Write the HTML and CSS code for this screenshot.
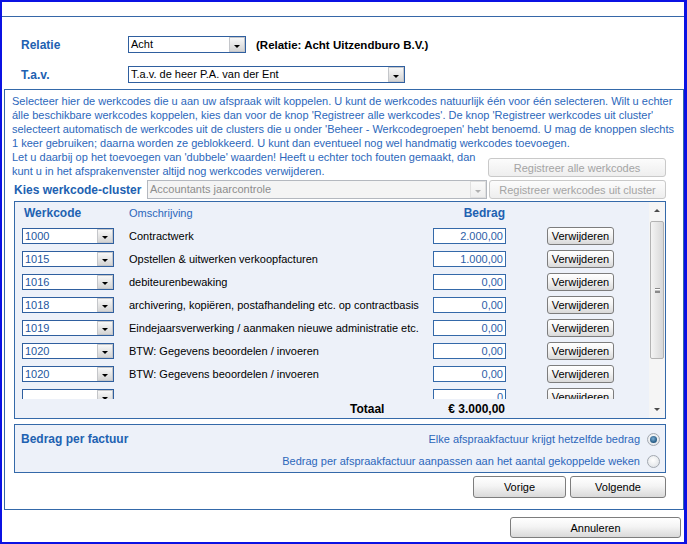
FILE: index.html
```html
<!DOCTYPE html>
<html lang="nl">
<head>
<meta charset="utf-8">
<title>Werkcodes koppelen</title>
<link rel="stylesheet" href="styles.css">
</head>
<body>
<div class="window">
  <div class="top">
    <div class="field-row">
      <span class="lbl-top">Relatie</span>
      <div class="select sel-relatie"><span class="val">Acht</span><span class="dd"></span></div>
      <span class="rel-info">(Relatie: Acht Uitzendburo B.V.)</span>
    </div>
    <div class="field-row">
      <span class="lbl-top">T.a.v.</span>
      <div class="select sel-tav"><span class="val">T.a.v. de heer P.A. van der Ent</span><span class="dd"></span></div>
    </div>
  </div>

  <div class="panel">
    <p class="desc">Selecteer hier de werkcodes die u aan uw afspraak wilt koppelen. U kunt de werkcodes natuurlijk één voor één selecteren. Wilt u echter<br>álle beschikbare werkcodes koppelen, kies dan voor de knop 'Registreer alle werkcodes'. De knop 'Registreer werkcodes uit cluster'<br>selecteert automatisch de werkcodes uit de clusters die u onder 'Beheer - Werkcodegroepen' hebt benoemd. U mag de knoppen slechts<br>1 keer gebruiken; daarna worden ze geblokkeerd. U kunt dan eventueel nog wel handmatig werkcodes toevoegen.</p>
    <div class="warn-row">
      <p class="desc warn">Let u daarbij op het toevoegen van 'dubbele' waarden! Heeft u echter toch fouten gemaakt, dan<br>kunt u in het afsprakenvenster altijd nog werkcodes verwijderen.</p>
      <button class="btn-dis btn-reg">Registreer alle werkcodes</button>
    </div>
    <div class="cluster-row">
      <span class="lbl-cluster">Kies werkcode-cluster</span>
      <div class="select select-dis"><span class="val">Accountants jaarcontrole</span><span class="dd dd-dis"></span></div>
      <button class="btn-dis btn-cluster">Registreer werkcodes uit cluster</button>
    </div>

    <div class="codes">
      <div class="codes-main">
        <div class="codes-head">
          <span class="h-code">Werkcode</span>
          <span class="h-omschr">Omschrijving</span>
          <span class="h-bedrag">Bedrag</span>
        </div>
        <div class="codes-rows">
          <div class="row"><div class="select code-sel"><span class="val">1000</span><span class="dd"></span></div><span class="omschr">Contractwerk</span><span class="amount">2.000,00</span><button class="btn del">Verwijderen</button></div>
          <div class="row"><div class="select code-sel"><span class="val">1015</span><span class="dd"></span></div><span class="omschr">Opstellen &amp; uitwerken verkoopfacturen</span><span class="amount">1.000,00</span><button class="btn del">Verwijderen</button></div>
          <div class="row"><div class="select code-sel"><span class="val">1016</span><span class="dd"></span></div><span class="omschr">debiteurenbewaking</span><span class="amount">0,00</span><button class="btn del">Verwijderen</button></div>
          <div class="row"><div class="select code-sel"><span class="val">1018</span><span class="dd"></span></div><span class="omschr">archivering, kopiëren, postafhandeling etc. op contractbasis</span><span class="amount">0,00</span><button class="btn del">Verwijderen</button></div>
          <div class="row"><div class="select code-sel"><span class="val">1019</span><span class="dd"></span></div><span class="omschr">Eindejaarsverwerking / aanmaken nieuwe administratie etc.</span><span class="amount">0,00</span><button class="btn del">Verwijderen</button></div>
          <div class="row"><div class="select code-sel"><span class="val">1020</span><span class="dd"></span></div><span class="omschr">BTW: Gegevens beoordelen / invoeren</span><span class="amount">0,00</span><button class="btn del">Verwijderen</button></div>
          <div class="row"><div class="select code-sel"><span class="val">1020</span><span class="dd"></span></div><span class="omschr">BTW: Gegevens beoordelen / invoeren</span><span class="amount">0,00</span><button class="btn del">Verwijderen</button></div>
          <div class="row"><div class="select code-sel"><span class="val"></span><span class="dd"></span></div><span class="omschr"></span><span class="amount">0</span><button class="btn del">Verwijderen</button></div>
        </div>
        <div class="codes-total">
          <span class="t-code"></span>
          <span class="t-lbl">Totaal</span>
          <span class="t-sum">€ 3.000,00</span>
        </div>
      </div>
      <div class="vscroll">
        <div class="sb-btn"><span class="arr-up"></span></div>
        <div class="sb-track"><div class="sb-thumb"><span class="grip"></span></div></div>
        <div class="sb-btn"><span class="arr-down"></span></div>
      </div>
    </div>

    <div class="factuur">
      <div class="f-row">
        <span class="f-lbl">Bedrag per factuur</span>
        <span class="f-opt">Elke afspraakfactuur krijgt hetzelfde bedrag</span>
        <span class="radio on"></span>
      </div>
      <div class="f-row">
        <span class="f-opt">Bedrag per afspraakfactuur aanpassen aan het aantal gekoppelde weken</span>
        <span class="radio"></span>
      </div>
    </div>

    <div class="nav">
      <button class="btn btn-vorige">Vorige</button>
      <button class="btn btn-volgende">Volgende</button>
    </div>
  </div>

  <div class="footer">
    <button class="btn btn-annuleren">Annuleren</button>
  </div>
</div>
</body>
</html>
```

FILE: styles.css
```css
body {
  margin: 0;
}

.window {
  width: 687px;
  height: 544px;
  box-sizing: border-box;
  border-style: solid;
  border-color: #0b12e3;
  border-width: 2px 3px 2px 2px;
  background: #fff;
  font-family: "Liberation Sans", Arial, sans-serif;
  font-size: 11px;
  color: #000;
  overflow: hidden;
}

/* ---------- top fields ---------- */
.top {
  margin-top: 14px;
  border-top: 1px solid #3667a8;
  padding: 19px 0 6px;
  display: flex;
  flex-direction: column;
  gap: 13px;
}

.field-row {
  display: flex;
  align-items: center;
  height: 17px;
}

.lbl-top {
  width: 107px;
  margin-left: 19px;
  font-weight: bold;
  font-size: 12px;
  color: #2161b1;
}

.select {
  display: flex;
  height: 17px;
  box-sizing: border-box;
  border: 1px solid #2f5f9f;
  background: #fff;
}

.select .val {
  flex: 1;
  padding-left: 2px;
  line-height: 15px;
  white-space: nowrap;
  overflow: hidden;
}

.dd {
  width: 16px;
  box-sizing: border-box;
  border: 1px solid #c4c6ca;
  background: linear-gradient(#f8f8f8, #d4d4d4);
  display: flex;
  align-items: center;
  justify-content: center;
}

.dd::after {
  content: "";
  border-left: 3px solid transparent;
  border-right: 3px solid transparent;
  border-top: 3px solid #000;
  margin-top: 3px;
}

.sel-relatie {
  width: 118px;
}

.sel-tav {
  width: 277px;
}

.rel-info {
  margin-left: 10px;
  font-weight: bold;
  font-size: 11.5px;
}

/* ---------- panel ---------- */
.panel {
  margin-left: 2px;
  height: 421px;
  box-sizing: border-box;
  border: 1px solid #3469a9;
}

.desc {
  margin: 4px 0 0 7px;
  line-height: 14px;
  color: #2c67bb;
  white-space: nowrap;
}

.warn-row {
  display: flex;
  align-items: flex-end;
}

.desc.warn {
  margin-top: 0;
  width: 476px;
}

.btn-dis {
  height: 19px;
  padding: 0;
  font-family: "Liberation Sans", Arial, sans-serif;
  font-size: 11px;
  color: #a4a4a4;
  border: 1px solid #c9c9c9;
  border-radius: 3px;
  background: linear-gradient(#fcfcfc, #eeeeee);
}

.btn-reg {
  width: 178px;
  margin-bottom: 1px;
}

.cluster-row {
  display: flex;
  align-items: center;
  margin: 2px 0 0 9px;
  height: 19px;
}

.lbl-cluster {
  width: 133px;
  font-weight: bold;
  font-size: 12px;
  color: #2161b1;
}

.select-dis {
  width: 340px;
  height: 19px;
  border-color: #b4b8bf;
  background: #f4f4f4;
  color: #8d8d8d;
}

.select-dis .val {
  line-height: 17px;
}

.dd-dis {
  border-color: #e0e0e0;
  background: linear-gradient(#fafafa, #eeeeee);
}

.dd-dis::after {
  border-top-color: #b0b0b0;
}

.btn-cluster {
  width: 177px;
  margin-left: 2px;
}

/* ---------- codes box ---------- */
.codes {
  margin: 2px 0 0 9px;
  width: 652px;
  height: 218px;
  box-sizing: border-box;
  border: 1px solid #3469a9;
  background: #edf1f9;
  display: flex;
}

.codes-main {
  flex: 1;
  display: flex;
  flex-direction: column;
}

.codes-head {
  height: 22px;
  display: flex;
  align-items: center;
  flex-shrink: 0;
}

.h-code {
  margin-left: 7px;
  width: 90px;
  padding-left: 2px;
  font-weight: bold;
  font-size: 12px;
  color: #2161b1;
}

.h-omschr {
  margin-left: 15px;
  width: 304px;
  color: #2c67bb;
}

.h-bedrag {
  width: 72px;
  text-align: right;
  padding-right: 1px;
  font-weight: bold;
  font-size: 12px;
  color: #2161b1;
}

.codes-rows {
  height: 175px;
  overflow: hidden;
  flex-shrink: 0;
}

.row {
  display: flex;
  align-items: center;
  height: 23px;
}

.code-sel {
  margin-left: 7px;
  width: 92px;
  height: 16px;
  color: #24559d;
}

.code-sel .val {
  line-height: 14px;
}

.omschr {
  margin-left: 15px;
  width: 304px;
  white-space: nowrap;
}

.amount {
  width: 73px;
  height: 16px;
  box-sizing: border-box;
  border: 1px solid #3469a9;
  background: #fff;
  text-align: right;
  padding-right: 2px;
  line-height: 14px;
  color: #2d5ea8;
}

.btn {
  padding: 0;
  font-family: "Liberation Sans", Arial, sans-serif;
  font-size: 11px;
  color: #000;
  border: 1px solid #7d7d7d;
  border-radius: 3px;
  background: linear-gradient(#ffffff 0%, #f4f4f4 45%, #d9d9d9 100%);
}

.del {
  margin-left: 41px;
  width: 67px;
  height: 18px;
  margin-top: 1px;
}

.codes-total {
  height: 19px;
  display: flex;
  align-items: center;
  font-weight: bold;
  font-size: 12px;
}

.t-code {
  margin-left: 7px;
  width: 92px;
}

.t-lbl {
  margin-left: 15px;
  width: 304px;
  padding-left: 221px;
  box-sizing: border-box;
}

.t-sum {
  width: 73px;
  text-align: right;
  padding-right: 1px;
  box-sizing: border-box;
}

/* scrollbar */
.vscroll {
  width: 16px;
  display: flex;
  flex-direction: column;
  background: #f5f5f5;
}

.sb-btn {
  height: 17px;
  display: flex;
  align-items: center;
  justify-content: center;
  flex-shrink: 0;
}

.arr-up {
  border-left: 3px solid transparent;
  border-right: 3px solid transparent;
  border-bottom: 3px solid #4a4a4a;
}

.arr-down {
  border-left: 3px solid transparent;
  border-right: 3px solid transparent;
  border-top: 3px solid #4a4a4a;
}

.sb-track {
  flex: 1;
  padding: 2px 1px 0;
}

.sb-thumb {
  height: 138px;
  box-sizing: border-box;
  border: 1px solid #b3b3b3;
  border-radius: 2px;
  background: linear-gradient(90deg, #f4f4f4, #d8d8d8);
  display: flex;
  align-items: center;
  justify-content: center;
}

.grip {
  width: 5px;
  height: 5px;
  border-top: 1px solid #8a8a8a;
  border-bottom: 1px solid #8a8a8a;
  background: linear-gradient(#fff 0, #fff 1px, #8a8a8a 2px, #8a8a8a 3px, #fff 3px);
  box-sizing: border-box;
}

/* ---------- factuur box ---------- */
.factuur {
  margin: 5px 0 0 9px;
  width: 652px;
  height: 49px;
  box-sizing: border-box;
  border: 1px solid #3469a9;
  background: #edf1f9;
  padding-top: 3px;
}

.f-row {
  display: flex;
  align-items: center;
  height: 22px;
}

.f-lbl {
  margin-left: 6px;
  font-weight: bold;
  font-size: 12px;
  color: #2161b1;
}

.f-opt {
  margin-left: auto;
  color: #2c67bb;
  white-space: nowrap;
}

.radio {
  width: 13px;
  height: 13px;
  margin: 0 5px 0 7px;
  box-sizing: border-box;
  border: 1px solid #a2a8b0;
  border-radius: 50%;
  background: radial-gradient(circle at 45% 40%, #ffffff, #d9dde2);
  display: flex;
  align-items: center;
  justify-content: center;
}

.radio.on::after {
  content: "";
  width: 7px;
  height: 7px;
  border-radius: 50%;
  background: radial-gradient(circle at 45% 40%, #7eb0d6, #20557f 70%);
}

/* ---------- nav & footer ---------- */
.nav {
  display: flex;
  justify-content: flex-end;
  gap: 4px;
  margin: 3px 17px 0 0;
}

.btn-vorige {
  width: 93px;
  height: 22px;
}

.btn-volgende {
  width: 96px;
  height: 22px;
}

.footer {
  display: flex;
  justify-content: flex-end;
  margin: 7px 3px 0 0;
}

.btn-annuleren {
  width: 171px;
  height: 21px;
}
```
